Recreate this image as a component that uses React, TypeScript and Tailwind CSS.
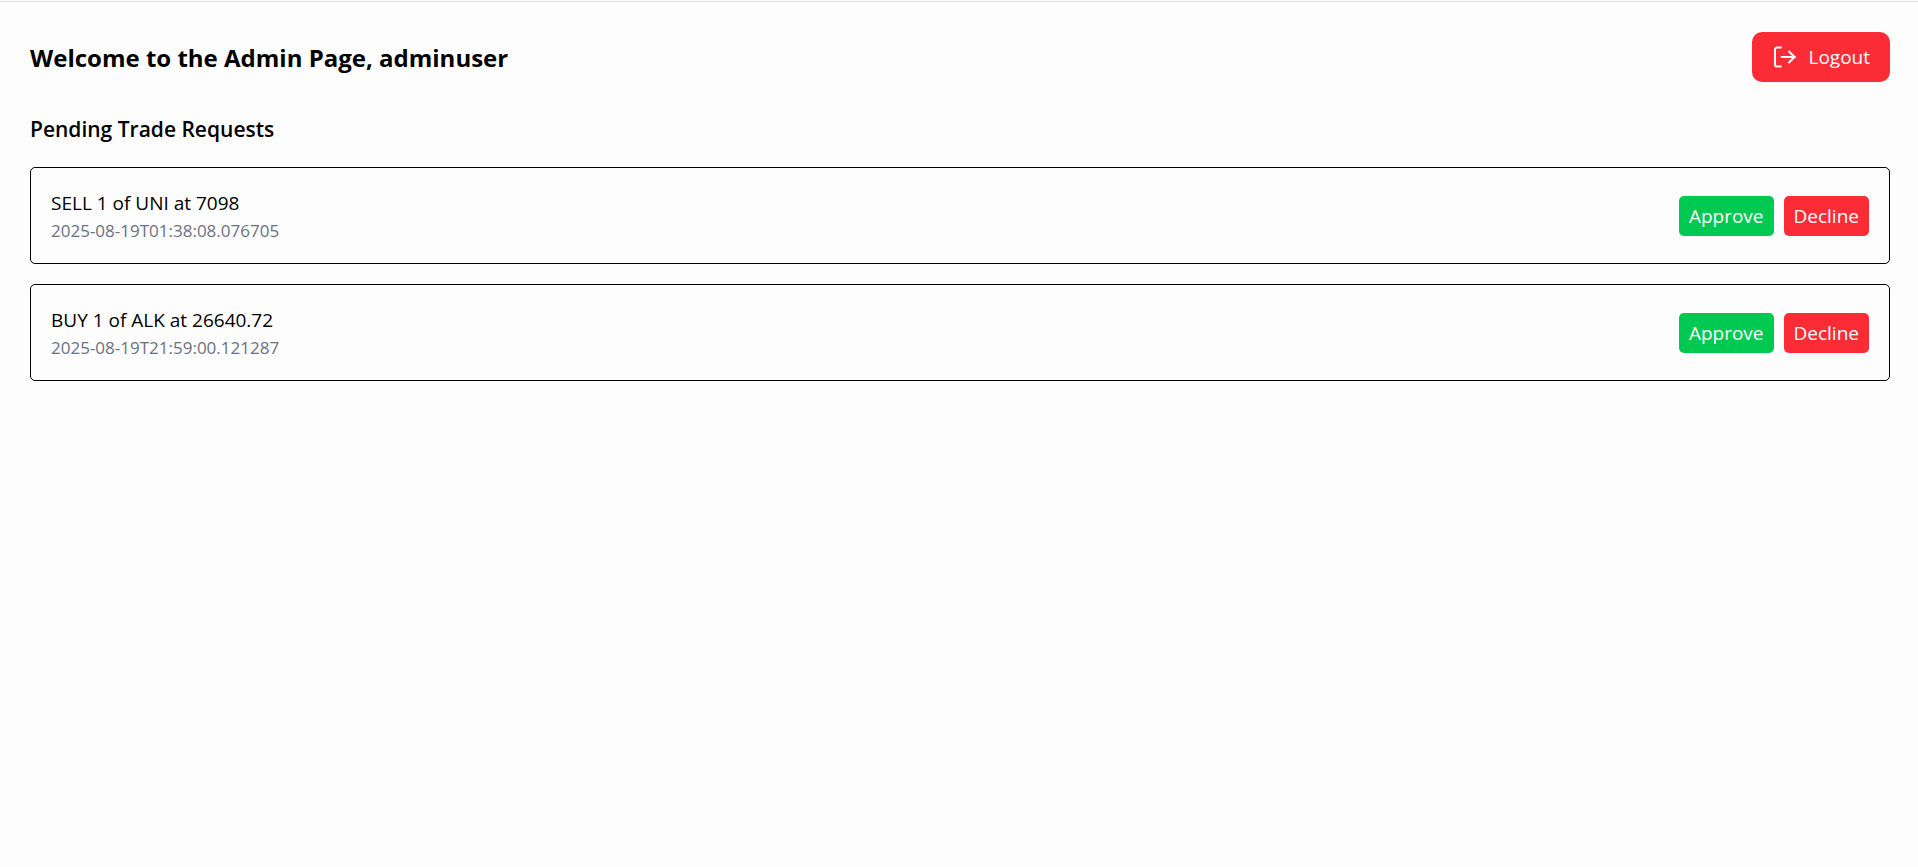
interface Trade {
  id: number;
  side: 'BUY' | 'SELL';
  quantity: number;
  symbol: string;
  price: number;
  timestamp: string;
}

const pendingTrades: Trade[] = [
  { id: 1, side: 'SELL', quantity: 1, symbol: 'UNI', price: 7098, timestamp: '2025-08-19T01:38:08.076705' },
  { id: 2, side: 'BUY', quantity: 1, symbol: 'ALK', price: 26640.72, timestamp: '2025-08-19T21:59:00.121287' },
];

function LogoutIcon() {
  return (
    <svg
      className="size-[26px]"
      viewBox="0 0 26 26"
      fill="none"
      stroke="currentColor"
      strokeWidth="2"
      strokeLinecap="round"
      strokeLinejoin="round"
      aria-hidden="true"
    >
      <path d="M9 3.5H5a2 2 0 0 0-2 2v15a2 2 0 0 0 2 2h4" />
      <path d="M9.5 13H23" />
      <path d="m17 7.5 5.5 5.5-5.5 5.5" />
    </svg>
  );
}

function TradeCard({ trade }: { trade: Trade }) {
  return (
    <li className="flex items-center justify-between rounded-[5px] border border-black p-5">
      <div>
        <p className="text-[19px] leading-[30px]">
          {trade.side} {trade.quantity} of {trade.symbol} at {trade.price}
        </p>
        <p className="text-[17px] leading-[25px] text-gray-500">{trade.timestamp}</p>
      </div>
      <div className="flex gap-[10px] text-[19px] leading-[30px] text-white">
        <button className="rounded-[5px] bg-green-500 px-[10px] py-[5px]">Approve</button>
        <button className="rounded-[5px] bg-red-500 px-[10px] py-[5px]">Decline</button>
      </div>
    </li>
  );
}

export default function App() {
  return (
    <div className="min-h-screen bg-[#fdfdfd] pt-px font-['Open_Sans',sans-serif] text-black">
      <main className="border-t border-[#e0e0e0] pt-[30px] pr-7 pl-[30px]">
        <header className="mb-[30px] flex items-center justify-between">
          <h1 className="text-2xl leading-[35px] font-bold">Welcome to the Admin Page, adminuser</h1>
          <button className="flex items-center gap-[10px] rounded-[10px] bg-red-500 px-5 py-[10px] text-[19px] leading-[30px] text-white">
            <LogoutIcon />
            Logout
          </button>
        </header>
        <h2 className="mb-5 text-[21px] leading-[35px] font-semibold">Pending Trade Requests</h2>
        <ul className="space-y-5">
          {pendingTrades.map((trade) => (
            <TradeCard key={trade.id} trade={trade} />
          ))}
        </ul>
      </main>
    </div>
  );
}
